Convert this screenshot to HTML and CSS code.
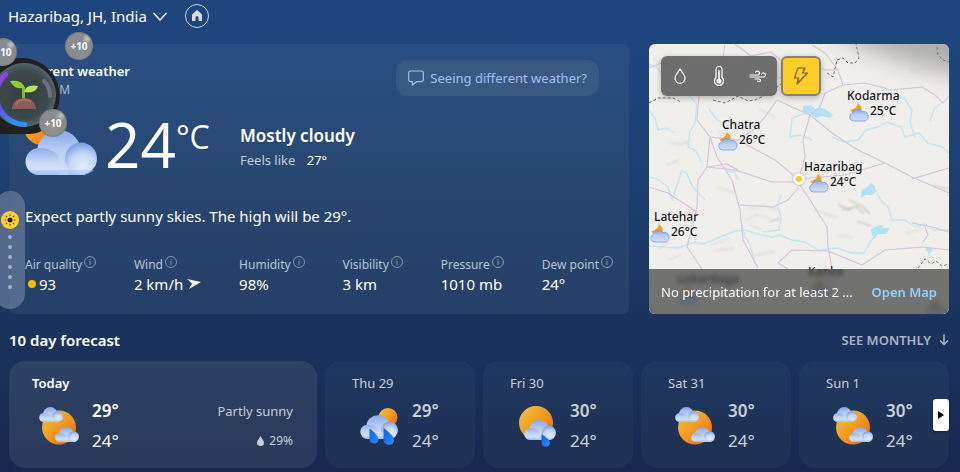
FILE: index.html
```html
<!DOCTYPE html>
<html lang="en">
<head>
<meta charset="utf-8">
<meta name="viewport" content="width=device-width, initial-scale=1">
<title>Weather</title>
<link rel="stylesheet" href="styles.css">
</head>
<body>
<svg class="defs" aria-hidden="true">
  <defs>
    <linearGradient id="sun" x1="0.1" y1="0.1" x2="0.9" y2="0.9"><stop offset="0" stop-color="#efbd38"/><stop offset="0.5" stop-color="#f09a22"/><stop offset="1" stop-color="#f06a10"/></linearGradient>
    <linearGradient id="cloud" x1="0" y1="0" x2="0" y2="1"><stop offset="0" stop-color="#86a7ea"/><stop offset="0.45" stop-color="#b9cdf4"/><stop offset="1" stop-color="#d0dff8"/></linearGradient>
    <linearGradient id="left" x1="0" y1="0" x2="0" y2="1"><stop offset="0" stop-color="#8fade9"/><stop offset="0.5" stop-color="#c6d7f6"/><stop offset="0.8" stop-color="#d2e0f8"/><stop offset="1" stop-color="#a3bcf0"/></linearGradient>
    <radialGradient id="puff" cx="0.55" cy="0.75" r="0.75"><stop offset="0" stop-color="#e2edfe"/><stop offset="0.55" stop-color="#c5d6f7"/><stop offset="1" stop-color="#7799e2"/></radialGradient>
    <linearGradient id="drop" x1="0" y1="0" x2="1" y2="1"><stop offset="0" stop-color="#0f5fe0"/><stop offset="1" stop-color="#2f8dff"/></linearGradient>
    <symbol id="i-cloud" viewBox="0 0 72 45">
      <circle cx="34" cy="22" r="22" fill="url(#cloud)"/>
      <path d="M14 18C28 18 36 26 40 34H60V45H14A13.500 13.500 0 0 1 14 18z" fill="url(#left)"/>
      <circle cx="56" cy="28.500" r="16" fill="url(#puff)"/>
      <path d="M34 25C38 28 40 32 42 36L44 45H34z" fill="#cbdbf8" opacity="0.7"/>
      <path d="M3 40H69Q64 45 57 45H14Q7 45 3 40z" fill="#a9c2f3" opacity="0.5"/>
    </symbol>
    <symbol id="i-partly" viewBox="0 0 40 38">
      <circle cx="20" cy="20.500" r="17" fill="url(#sun)"/>
      <use href="#i-cloud" x="0" y="0" width="24" height="15"/>
      <use href="#i-cloud" x="16" y="20" width="24" height="15"/>
    </symbol>
    <symbol id="i-rain" viewBox="0 0 40 38">
      <circle cx="29" cy="10.500" r="9.500" fill="url(#sun)"/>
      <use href="#i-cloud" x="1" y="8" width="38" height="24"/>
      <path d="M10.500 21.500C15 25 19.500 29 19.500 32.500C19.500 38 10.500 37.500 10.500 32z" fill="url(#drop)"/>
      <path d="M24.500 21C30 25 35 29.500 35 33.500C35 39.500 24.500 39 24.500 33z" fill="url(#drop)"/>
    </symbol>
    <symbol id="i-shower" viewBox="0 0 40 41">
      <circle cx="19" cy="17" r="17" fill="url(#sun)"/>
      <use href="#i-cloud" x="7" y="14" width="32" height="20"/>
      <path d="M24.500 28C29 31 33 34 33 37C33 42 24.500 42 24.500 36.500z" fill="url(#drop)"/>
    </symbol>
    <symbol id="i-night" viewBox="0 0 20 20">
      <path d="M8.500 1C8.500 5 5.500 7.500 1.500 8C3 12 8 14 11.500 10.500C14 8 12.500 3 8.500 1z" fill="#f3a023"/>
      <path d="M4.500 19A4 4 0 0 1 3.500 11.200A5.500 5.500 0 0 1 13 9.500A4.800 4.800 0 1 1 15.500 19z" fill="url(#cloud)" stroke="#6a90e6" stroke-width="0.700"/>
    </symbol>
    <symbol id="i-info" viewBox="0 0 12 12"><circle cx="6" cy="6" r="5.500" fill="none" stroke="currentColor"/><path d="M6 5v4M6 3v1" stroke="currentColor" fill="none"/></symbol>
    <radialGradient id="orb" cx="0.5" cy="0.5" r="0.5"><stop offset="0" stop-color="#363d3e"/><stop offset="0.75" stop-color="#3c494c"/><stop offset="1" stop-color="#51656b"/></radialGradient>
    <linearGradient id="arc" x1="0" y1="0" x2="0.5" y2="1"><stop offset="0" stop-color="#a33fe4"/><stop offset="0.6" stop-color="#6052e8"/><stop offset="1" stop-color="#2f8ff0"/></linearGradient>
    <filter id="soft"><feGaussianBlur stdDeviation="0.8"/></filter>
    <filter id="haze" x="-50%" y="-50%" width="200%" height="200%"><feGaussianBlur stdDeviation="12"/></filter>
  </defs>
</svg>

<header class="topbar">
  <button class="place" type="button">Hazaribag, JH, India
    <svg width="14" height="9" viewBox="0 0 14 9" fill="none" stroke="currentColor" stroke-width="1.200"><path d="M0.500 1L7 8L13.500 1"/></svg>
  </button>
  <button class="home" type="button" aria-label="Home">
    <svg width="12" height="12" viewBox="0 0 12 12" fill="currentColor"><path d="M6 0L11 4.500V11H7.500V7.500A1.500 1.500 0 0 0 4.500 7.500V11H1V4.500z"/></svg>
  </button>
</header>

<main class="page">
  <div class="overview">
    <section class="card current">
      <div class="current-head">
        <div>
          <h1 class="current-title">Current weather</h1>
          <p class="current-time">1:00 PM</p>
        </div>
        <button class="feedback" type="button">
          <svg width="16" height="16" viewBox="0 0 16 16" fill="none" stroke="currentColor" stroke-width="1.200" stroke-linejoin="round"><path d="M3 1H13Q15.300 1 15.300 3.200V9.500Q15.300 11.700 13 11.700H8.500L4.300 15V11.700H3Q0.700 11.700 0.700 9.500V3.200Q0.700 1 3 1z"/></svg>
          Seeing different weather?
        </button>
      </div>
      <div class="now">
        <svg class="now-icon" width="72" height="54" viewBox="0 0 72 54"><circle cx="17" cy="6" r="18" fill="url(#sun)"/><use href="#i-cloud" x="0" y="9" width="72" height="45"/></svg>
        <div class="now-temp">24<span class="unit">°C</span></div>
        <div class="now-text">
          <div class="condition">Mostly cloudy</div>
          <div class="feels">Feels like <span>27°</span></div>
        </div>
      </div>
      <p class="summary">Expect partly sunny skies. The high will be 29°.</p>
      <dl class="metrics">
        <div><dt>Air quality <svg width="12" height="12"><use href="#i-info"/></svg></dt><dd><i class="aqi"></i>93</dd></div>
        <div><dt>Wind <svg width="12" height="12"><use href="#i-info"/></svg></dt><dd>2 km/h <svg class="arrow" width="14" height="12" viewBox="0 0 14 12" fill="currentColor"><path d="M0 1L14 4L2 11L5 5.500z"/></svg></dd></div>
        <div><dt>Humidity <svg width="12" height="12"><use href="#i-info"/></svg></dt><dd>98%</dd></div>
        <div><dt>Visibility <svg width="12" height="12"><use href="#i-info"/></svg></dt><dd>3 km</dd></div>
        <div><dt>Pressure <svg width="12" height="12"><use href="#i-info"/></svg></dt><dd>1010 mb</dd></div>
        <div><dt>Dew point <svg width="12" height="12"><use href="#i-info"/></svg></dt><dd>24°</dd></div>
      </dl>
    </section>

    <section class="map" aria-label="Weather map">
      <svg class="terrain" viewBox="0 0 300 270" preserveAspectRatio="xMidYMid slice" aria-hidden="true">
        <rect width="300" height="270" fill="#f0efec"/>
        <path d="M190 -30H330V35Q250 22 190 -8z" fill="#999" opacity="0.75" filter="url(#haze)"/>
        <g fill="none" stroke="#c6c4bf" stroke-width="1.100" opacity="0.6" filter="url(#soft)">
          <path d="M10 56q12-8 24-5M60 50q14 6 25-3M20 98q12 5 22-2M244 15l18-6M262 27l21-4M99 165l15-4 14 5M96 176l12-5 13 3M70 88l14 5M100 180l13 6M62 201l18-6M65 207l20-3M176 170l12 3M258 189l18-5M106 212l20-5M9 205l12-7M20 216l12-5M7 190l10-3M190 191l14 3M4 15l22 8M25 18l16 10M226 61l20 5M200 71l14-2M110 65l16 8M18 121l12-5M70 143l15 6M213 149l16-2M165 166l18 6"/>
        </g>
        <path fill="none" stroke="#a5a39f" stroke-width="1.200" opacity="0.65" filter="url(#soft)" d="M189 160l10 6 8-4 8 8M208 177l14 5M200 156l13 6 8 8M284 142l16 3M120 178l12-4M193 166l9-2"/>
        <g fill="none" stroke="#c3e6f4" stroke-width="1.400" stroke-linejoin="round">
          <path d="M0 66l6 8 3 12 8-2 9 5M46 40l-6 12 8 8-2 19-5 8-2 16 8 4 6 12M0 20l9 4 4 10 12 4 5 12M30 14l8 12 12 4 5 10M163 96l-12-5-10 2 2-19 18-6M105 16l14 4 10 14 16-3M183 93l12 5 14-2 8-10 12-3 9-5 14 5 4 10 14-4 9 10 14 4 7 6M229 51l10-4 16 7 8 12-2 12 5 15M295 57l-10 8-4 12M1 133l9 3 9 7 4 13 10-30 5 4 5 12 13 14M0 202l29 2 17-6 8 2 10-4 12-5 10-4 10-1 12 4 15 3 8-2 12 5 13 2 13 8 20-2 13 5 13 0 6-11 7-9M228 149l5 9 6 5 4 13 13 0 10 7 10-3 8 6 16 0M91 173l5 20 5 7 5 19M76 127l10 1 3 8M132 150l-4 12 4 10-2 14-16 2M60 65l9 12 12 3M280 206l0 8"/>
        </g>
        <g fill="#b5e1f4"><path d="M154 62l8-1 4 4 8-1 10 7-3 3-8-2-6 2-6-5-7-1zM213 146l5-3 4-4 4 3 1 6-5 3-5 0-5 3zM222 185l6-3 5-1 1 3 7 0-4 6-8 0-4 5-2-5zM276 205l4-2 4 2-3 5z"/></g>
        <g fill="none" stroke="#d8c2dc" stroke-width="1.100" stroke-linejoin="round">
          <path d="M86 0l16 12 20-4 11 9 22 0 21 9 13 0M76 1l-2 12 4 12M163 1l13 8 13 17 5 15 22-2 27 7 30-3 13 8 8 8 6-7M194 41l-18 8-5 14-10 8-18-8-15-7-12 17-13 14-14 9-28-3M161 71l-7 25 2 17-6 22M161 71l22 18 26 17 27 13M51 39l-3 37 13 17-3 30-9 13-1 27-10 40 11 16 6 9M61 93l7 20 15 23 8 30 3 30 15 28M89 96l37 20 23 19M149 138l-26 0-37-12-27-3M149 135l47-4 33-10 7-2 27 14 37 16M149 138l14 21 15 24 1 20 4 21-4 22M149 144l-10 12-15 7-33-2M129 219l14-13 36 1 34 14 23-15 37-3 27 3M129 219l10 6M0 143l19 6 29 19M263 135l20-6 17-5M263 179l20 4 17 5M276 183l3 8-6 8M0 24l15-6 18 8M58 123l20-3 11 6"/>
        </g>
        <path fill="none" stroke="#77736f" stroke-dasharray="3 2" d="M0 59l9-5 15 0 8 4M64 56l12 3 13-7 10 5 7-1 15-7 12-10M178 29l6 4 4-17 6-2 5 5 7 0 4-5-3-14M288 3l1 8 5 5 6 2M269 224l7-9 6 5 5-3 6 5 7-2"/>
      </svg>
      <div class="pin kodarma">Kodarma<span><svg width="20" height="20"><use href="#i-night"/></svg>25°C</span></div>
      <div class="pin chatra">Chatra<span><svg width="20" height="20"><use href="#i-night"/></svg>26°C</span></div>
      <div class="pin hazaribag">Hazaribag<span><svg width="20" height="20"><use href="#i-night"/></svg>24°C</span></div>
      <div class="pin latehar">Latehar<span><svg width="20" height="20"><use href="#i-night"/></svg>26°C</span></div>
      <div class="pin lohardaga">Lohardaga<span><svg width="20" height="20"><use href="#i-night"/></svg></span></div>
      <div class="pin kanke">Kanke<span><svg width="20" height="20"><use href="#i-night"/></svg></span></div>
      <div class="pin muri"><span><svg width="20" height="20"><use href="#i-night"/></svg></span></div>
      <i class="marker"></i>
      <div class="tools">
        <div class="layers">
          <button type="button" aria-label="Precipitation"><svg width="12" height="16" viewBox="0 0 12 16"><path d="M6 1C8 4.500 11 7 11 10.300A5 5 0 0 1 1 10.300C1 7 4 4.500 6 1z"/></svg></button>
          <button type="button" aria-label="Temperature"><svg width="10" height="20" viewBox="0 0 10 20"><path d="M2 11.500V3.500A3 3 0 0 1 8 3.500V11.500A4.500 4.500 0 1 1 2 11.500z"/><path d="M5 5V13" stroke-width="1.600"/><circle cx="5" cy="15" r="2" fill="currentColor"/></svg></button>
          <button type="button" aria-label="Wind"><svg width="18" height="12" viewBox="0 0 18 12"><path d="M1 5H9A2 2 0 1 0 6.500 2.500M3 7H14.500A2 2 0 1 0 12.500 4.500M1 7H2M6 9H10A1.500 1.500 0 1 1 8.500 11"/></svg></button>
        </div>
        <button class="storm" type="button" aria-label="Lightning"><svg width="16" height="18" viewBox="0 0 16 18"><path d="M5 1H12L9.500 6H14.500L4 17L5.500 11H1.500z"/></svg></button>
      </div>
      <div class="map-foot"><span>No precipitation for at least 2 ...</span><a href="#map">Open Map</a></div>
    </section>
  </div>

  <section class="forecast">
    <div class="forecast-head">
      <h2>10 day forecast</h2>
      <a class="monthly" href="#monthly">SEE MONTHLY <svg width="10" height="12" viewBox="0 0 10 12" fill="none" stroke="currentColor" stroke-width="1.500"><path d="M5 0.500V10M1 6.500L5 10.500L9 6.500"/></svg></a>
    </div>
    <div class="days">
      <button class="day today" type="button">
        <span class="day-name">Today</span>
        <span class="day-body">
          <svg width="40" height="38"><use href="#i-partly"/></svg>
          <span class="temps"><b>29°</b><span>24°</span></span>
          <span class="detail"><span>Partly sunny</span><span class="chance"><svg width="7" height="10" viewBox="0 0 7 10" fill="currentColor"><path d="M3.500 0C4.500 2.500 7 4.500 7 6.700A3.500 3.300 0 0 1 0 6.700C0 4.500 2.500 2.500 3.500 0z"/></svg>29%</span></span>
        </span>
      </button>
      <button class="day" type="button">
        <span class="day-name">Thu 29</span>
        <span class="day-body"><svg width="40" height="38"><use href="#i-rain"/></svg><span class="temps"><b>29°</b><span>24°</span></span></span>
      </button>
      <button class="day" type="button">
        <span class="day-name">Fri 30</span>
        <span class="day-body"><svg width="40" height="41"><use href="#i-shower"/></svg><span class="temps"><b>30°</b><span>24°</span></span></span>
      </button>
      <button class="day" type="button">
        <span class="day-name">Sat 31</span>
        <span class="day-body"><svg width="40" height="38"><use href="#i-partly"/></svg><span class="temps"><b>30°</b><span>24°</span></span></span>
      </button>
      <button class="day" type="button">
        <span class="day-name">Sun 1</span>
        <span class="day-body"><svg width="40" height="38"><use href="#i-partly"/></svg><span class="temps"><b>30°</b><span>24°</span></span></span>
      </button>
      <button class="next" type="button" aria-label="Next days"><svg width="6" height="8" viewBox="0 0 6 8"><path d="M0 0L6 4L0 8z"/></svg></button>
    </div>
  </section>
</main>

<aside class="game" aria-label="Daily points">
  <svg class="orb" width="61" height="76" viewBox="0 0 61 76">
    <path d="M0 0H23A38 38 0 0 1 54 58Q47 76 28 76H0z" fill="#202020"/>
    <circle cx="24" cy="37" r="32" fill="url(#orb)"/>
    <path d="M5.500 16.500A29 29 0 0 0 25 66.500" fill="none" stroke="url(#arc)" stroke-width="5" stroke-linecap="round"/>
    <path d="M44 23Q50 29 50 38" fill="none" stroke="#6a7475" stroke-width="4" stroke-linecap="round"/>
    <path d="M12 51A12 11 0 0 1 36 51z" fill="#8d5c58"/>
    <path d="M16 47A9 8 0 0 1 31 44" fill="none" stroke="#a8716a" stroke-width="2"/>
    <path d="M23.500 40V30" stroke="#7dbd27" stroke-width="3"/>
    <path d="M10 23Q22 21 25 30Q14 32 10 23z" fill="#8ed02e"/>
    <path d="M38 28Q36 36 24 34Q26 26 38 28z" fill="#b3e752"/>
  </svg>
  <span class="bubble b1">+10</span>
  <span class="bubble b2">+10</span>
  <span class="bubble b3">+10</span>
</aside>
<nav class="rail" aria-label="Sections">
  <a href="#top" aria-label="Weather"><svg width="18" height="18" viewBox="0 0 18 18"><circle cx="9" cy="9" r="9" fill="#ffd02e"/><circle cx="9" cy="9" r="2.500" fill="#272318"/><path d="M9 3.500v1.500M9 13v1.500M3.500 9h1.500M13 9h1.500M5 5l1 1M12 12l1 1M5 13l1-1M12 6l1-1" stroke="#54451b" stroke-width="1.200"/></svg></a>
  <i></i><i></i><i></i><i></i><i></i><i></i>
</nav>
</body>
</html>
```
FILE: styles.css
```css
* { box-sizing: border-box; }
body {
  position: relative;
  margin: 0;
  min-height: 100vh;
  color: #fff;
  font: 14px/20px "Noto Sans", sans-serif;
  background: linear-gradient(#1e467f 0, #1e4479 100px, #1b355f 310px, #18284e 100%);
}
h1, h2, p, dl, dd { margin: 0; }
button { border: 0; padding: 0; color: inherit; font: inherit; background: none; text-align: left; }
a { color: inherit; text-decoration: none; }
svg { flex: none; }
.defs { position: absolute; width: 0; height: 0; }

.topbar { display: flex; align-items: center; gap: 18px; height: 44px; padding: 0 8px 12px; }
.place { display: flex; align-items: center; gap: 6px; font-size: 15px; }
.home { display: flex; align-items: center; justify-content: center; width: 24px; height: 24px; border: 1px solid #ccd6e4; border-radius: 50%; color: #d4dce8; }

.page { padding: 0 11px 4px 9px; }
.overview { display: grid; grid-template-columns: 1fr 300px; gap: 20px; }
.card { padding: 16px; border-radius: 6px; background: linear-gradient(#2a4f82, #28456f 60%, #263f68); }
.current { min-height: 270px; }
.current-head { display: flex; justify-content: space-between; height: 56px; }
.current-title { font-size: 13px; line-height: 22px; font-weight: 600; }
.current-time { font-size: 12px; line-height: 16px; color: #a9b8cc; }
.feedback { display: flex; align-items: center; gap: 6px; height: 36px; margin-right: 14px; padding: 0 12px; border-radius: 12px; background: #385981; color: #a0bffa; font-size: 13px; }
.now { display: flex; align-items: center; height: 64px; }
.now-icon { overflow: visible; }
.now-temp { display: flex; width: 135px; height: 72px; margin-left: 8px; font-family: "Open Sans", "Noto Sans", sans-serif; font-size: 62px; line-height: 64px; }
.unit { font-size: 32px; line-height: 50px; }
.condition { font-size: 17px; line-height: 24px; font-weight: 600; }
.feels { font-size: 13px; line-height: 24px; color: #c2cedd; }
.feels span { margin-left: 8px; color: #fff; }
.summary { margin-top: 26px; font-size: 15px; line-height: 20px; }
.metrics { display: flex; justify-content: space-between; margin-top: 30px; }
.metrics dt { display: flex; gap: 2px; font-size: 12px; line-height: 18px; color: #b9c4d4; }
.metrics dt svg { color: #8496b3; }
.metrics dd { display: flex; align-items: center; font-size: 15px; line-height: 20px; }
.aqi { width: 8px; height: 8px; margin: 0 3px; border-radius: 50%; background: #ffb900; }
.arrow { margin-left: 4px; }

.map { position: relative; display: flex; flex-direction: column; justify-content: space-between; overflow: hidden; border-radius: 6px; color: #111; }
.terrain { position: absolute; inset: 0; width: 100%; height: 100%; }
.pin { position: absolute; font-size: 12px; line-height: 16px; font-weight: 500; text-shadow: 0 0 2px #fff, 0 0 2px #fff; }
.pin span { display: flex; gap: 1px; height: 16px; line-height: 14px; padding-left: 2px; }
.pin svg { margin-top: -2px; }
.kodarma { left: 198px; top: 44px; }
.chatra { left: 73px; top: 73px; }
.chatra span, .latehar span { margin-left: -6px; }
.hazaribag { left: 155px; top: 115px; }
.hazaribag span { margin-left: 3px; }
.latehar { left: 5px; top: 165px; }
.lohardaga { left: 28px; top: 227px; }
.kanke { left: 159px; top: 220px; }
.muri { left: 275px; top: 256px; }
.marker { position: absolute; left: 144px; top: 129px; width: 12px; height: 12px; border: 3px solid #fff; border-radius: 50%; background: #ffc91f; box-shadow: 0 0 2px #888; }
.tools { position: relative; display: flex; gap: 4px; padding: 12px; }
.layers { display: grid; grid-template-columns: repeat(3, 1fr); width: 116px; height: 40px; border-radius: 6px; background: rgba(82, 82, 82, 0.82); backdrop-filter: blur(3px); color: #fff; box-shadow: 0 2px 6px rgba(0, 0, 0, 0.25); }
.tools button { display: flex; align-items: center; justify-content: center; }
.tools svg { fill: none; stroke: currentColor; stroke-width: 1.2; stroke-linecap: round; stroke-linejoin: round; }
.storm { width: 40px; height: 40px; border: 2px solid #858078; border-radius: 6px; background: #ffce28; color: #775a13; box-shadow: 0 2px 6px rgba(0, 0, 0, 0.25); }
.map-foot { position: relative; display: flex; align-items: center; justify-content: space-between; height: 45px; padding: 0 12px; background: rgba(65, 65, 65, 0.72); backdrop-filter: blur(2px); color: #fff; font-size: 13px; white-space: nowrap; }
.map-foot a { color: #8fd0ff; font-weight: 600; }

.forecast-head { display: flex; align-items: center; justify-content: space-between; height: 47px; padding-top: 4px; }
.forecast-head h2 { font-size: 15px; line-height: 20px; font-weight: 600; }
.monthly { display: flex; align-items: center; gap: 8px; color: #a8b3c4; font-size: 13px; font-weight: 600; }
.days { position: relative; display: grid; grid-template-columns: 308fr repeat(4, 150fr); gap: 8px; }
.day { height: 107px; padding: 10px 24px 10px 27px; border-radius: 16px; background: linear-gradient(#20385f, #1f3053); color: #c9d0da; }
.today { padding-left: 23px; background: linear-gradient(#2c4265, #2a395a); color: #fff; }
.day-name { display: block; margin-bottom: 3px; font-size: 13px; line-height: 20px; }
.today .day-name { font-weight: 600; }
.day-body { display: flex; align-items: center; gap: 13px; height: 60px; padding-left: 7px; }
.temps { display: flex; flex-direction: column; font-size: 17px; line-height: 30px; }
.temps b { font-weight: 600; }
.detail { display: flex; flex-direction: column; align-items: flex-end; margin-left: auto; font-size: 13px; line-height: 30px; color: #c5cdd9; }
.chance { display: flex; align-items: center; gap: 5px; font-size: 12px; }
.next { position: absolute; right: 0; top: 38px; display: flex; align-items: center; justify-content: center; width: 16px; height: 32px; border-radius: 3px; background: #fff; box-shadow: 0 1px 3px rgba(0, 0, 0, 0.4); }

.game { position: absolute; left: 0; top: 32px; width: 93px; height: 106px; overflow: hidden; }
.orb { position: absolute; left: 0; top: 26px; }
.bubble { position: absolute; width: 28px; height: 28px; border-radius: 50%; background: radial-gradient(circle at 78% 24%, rgba(225, 225, 225, 0.7), transparent 16%), radial-gradient(circle at 50% 50%, rgba(145, 150, 165, 0.85), #8c8c8c 60%, #7a7a7a 72%); font-size: 10px; line-height: 28px; font-weight: 700; text-align: center; }
.b1 { left: 65px; top: 0; }
.b2 { left: -11px; top: 6px; }
.b3 { left: 39px; top: 77px; }
.rail { position: absolute; left: -5px; top: 191px; display: flex; flex-direction: column; align-items: center; gap: 6px; width: 30px; height: 118px; padding-top: 20px; border-radius: 15px; background: rgba(104, 124, 154, 0.72); }
.rail a { height: 18px; }
.rail i { width: 4px; height: 4px; border-radius: 50%; background: #a3b0c5; }
```
